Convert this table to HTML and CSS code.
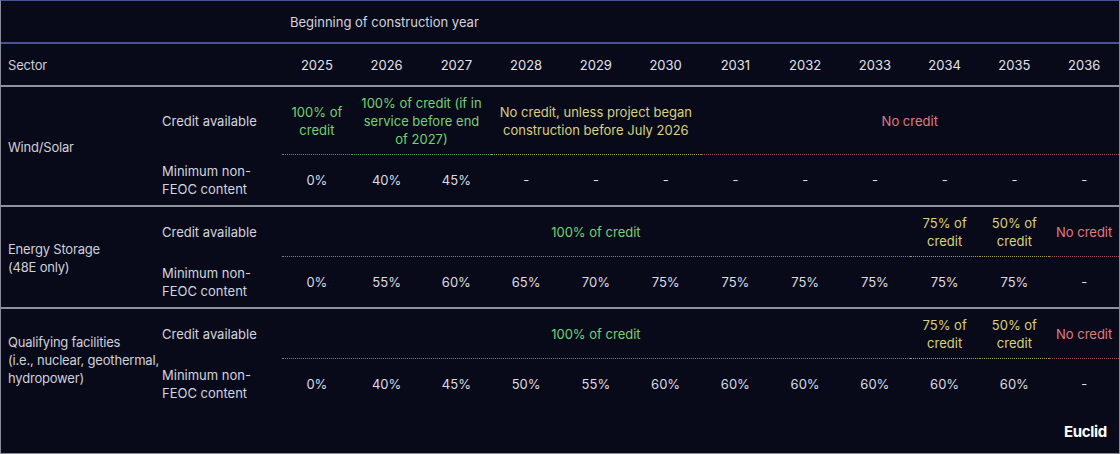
FILE: index.html
```html
<!DOCTYPE html>
<html lang="en">
<head>
<meta charset="utf-8">
<title>Credit availability by construction year</title>
<link rel="stylesheet" href="styles.css">
</head>
<body>
<div class="frame">
  <table class="grid">
    <colgroup>
      <col class="c-sector"><col class="c-label">
      <col><col><col><col><col><col><col><col><col><col><col><col>
    </colgroup>
    <tr class="head1">
      <td></td><td></td>
      <td colspan="12" class="caption">Beginning of construction year</td>
    </tr>
    <tr class="head2">
      <td class="sector">Sector</td><td></td>
      <td class="yr">2025</td><td class="yr">2026</td><td class="yr">2027</td><td class="yr">2028</td>
      <td class="yr">2029</td><td class="yr">2030</td><td class="yr">2031</td><td class="yr">2032</td>
      <td class="yr">2033</td><td class="yr">2034</td><td class="yr">2035</td><td class="yr">2036</td>
    </tr>

    <tr class="credit">
      <td rowspan="2" class="sector end">Wind/Solar</td>
      <td class="label">Credit available</td>
      <td class="v green">100% of<br>credit</td>
      <td colspan="2" class="v green">100% of credit (if in<br>service before end<br>of 2027)</td>
      <td colspan="3" class="v yellow">No credit, unless project began<br>construction before July 2026</td>
      <td colspan="6" class="v red">No credit</td>
    </tr>
    <tr class="feoc">
      <td class="label end">Minimum non-<br>FEOC content</td>
      <td class="n end">0%</td><td class="n end">40%</td><td class="n end">45%</td><td class="n end">-</td>
      <td class="n end">-</td><td class="n end">-</td><td class="n end">-</td><td class="n end">-</td>
      <td class="n end">-</td><td class="n end">-</td><td class="n end">-</td><td class="n end">-</td>
    </tr>

    <tr class="credit">
      <td rowspan="2" class="sector end">Energy Storage<br>(48E only)</td>
      <td class="label">Credit available</td>
      <td colspan="9" class="v green">100% of credit</td>
      <td class="v yellow">75% of<br>credit</td>
      <td class="v yellow">50% of<br>credit</td>
      <td class="v red">No credit</td>
    </tr>
    <tr class="feoc">
      <td class="label end">Minimum non-<br>FEOC content</td>
      <td class="n end">0%</td><td class="n end">55%</td><td class="n end">60%</td><td class="n end">65%</td>
      <td class="n end">70%</td><td class="n end">75%</td><td class="n end">75%</td><td class="n end">75%</td>
      <td class="n end">75%</td><td class="n end">75%</td><td class="n end">75%</td><td class="n end">-</td>
    </tr>

    <tr class="credit">
      <td rowspan="2" class="sector">Qualifying facilities<br>(i.e., nuclear, geothermal,<br>hydropower)</td>
      <td class="label">Credit available</td>
      <td colspan="9" class="v green">100% of credit</td>
      <td class="v yellow">75% of<br>credit</td>
      <td class="v yellow">50% of<br>credit</td>
      <td class="v red">No credit</td>
    </tr>
    <tr class="feoc">
      <td class="label">Minimum non-<br>FEOC content</td>
      <td class="n">0%</td><td class="n">40%</td><td class="n">45%</td><td class="n">50%</td>
      <td class="n">55%</td><td class="n">60%</td><td class="n">60%</td><td class="n">60%</td>
      <td class="n">60%</td><td class="n">60%</td><td class="n">60%</td><td class="n">-</td>
    </tr>
  </table>
  <div class="footer">
    <span class="logo">Euclid</span>
  </div>
</div>
</body>
</html>
```

FILE: styles.css
```css
* { box-sizing: border-box; }

html, body {
  margin: 0;
  padding: 0;
  background: #080a1a;
}

body {
  font-family: Inter, "Noto Sans", "Liberation Sans", sans-serif;
  font-size: 13px;
  line-height: 18px;
  color: #d9d9e0;
  width: 1120px;
  height: 454px;
  overflow: hidden;
}

.frame {
  width: 1120px;
  height: 454px;
  border-top: 1px solid #4a5290;
  border-left: 1px solid #8a8c99;
  border-right: 1px solid #8a8c99;
  border-bottom: 1px solid #8a8c99;
  display: flex;
  flex-direction: column;
}

.grid {
  width: 100%;
  table-layout: fixed;
  border-collapse: separate;
  border-spacing: 0;
}

.c-sector { width: 154px; }
.c-label { width: 127px; }

td {
  padding: 0;
  vertical-align: middle;
}

.head1 td {
  height: 43px;
  border-bottom: 2px solid #4a5290;
}

.caption {
  padding-left: 8px;
  color: #d4d4dc;
}

.head2 td {
  height: 43px;
  border-bottom: 2px solid #8e909c;
}

.sector {
  padding-left: 7px;
  color: #cfd0d8;
  white-space: nowrap;
  letter-spacing: -0.2px;
}

.yr {
  text-align: center;
  color: #e2e2ea;
}

.credit td {
  padding-top: 7px;
  padding-bottom: 6px;
}

.label {
  padding-left: 7px;
  color: #d4d4dc;
  white-space: nowrap;
}

.credit .label {
  padding-bottom: 7px;
}

.v {
  text-align: center;
  border-bottom: 1px dotted transparent;
}

.green { color: #74d36e; border-bottom-color: #4fa052; }
.yellow { color: #d9d27a; border-bottom-color: #a3a052; }
.red { color: #e07b80; border-bottom-color: #a0505e; }

.feoc td {
  padding-top: 7px;
  padding-bottom: 7px;
}

.n {
  text-align: center;
  color: #dcdce4;
}

.end {
  border-bottom: 2px solid #8e909c;
}

.footer {
  flex: 1;
  display: flex;
  justify-content: flex-end;
  align-items: center;
  padding-right: 12px;
  padding-top: 1px;
}

.logo {
  font-family: Inter, "Liberation Sans", sans-serif;
  font-weight: 700;
  font-size: 15px;
  letter-spacing: -0.3px;
  color: #ffffff;
}
```
